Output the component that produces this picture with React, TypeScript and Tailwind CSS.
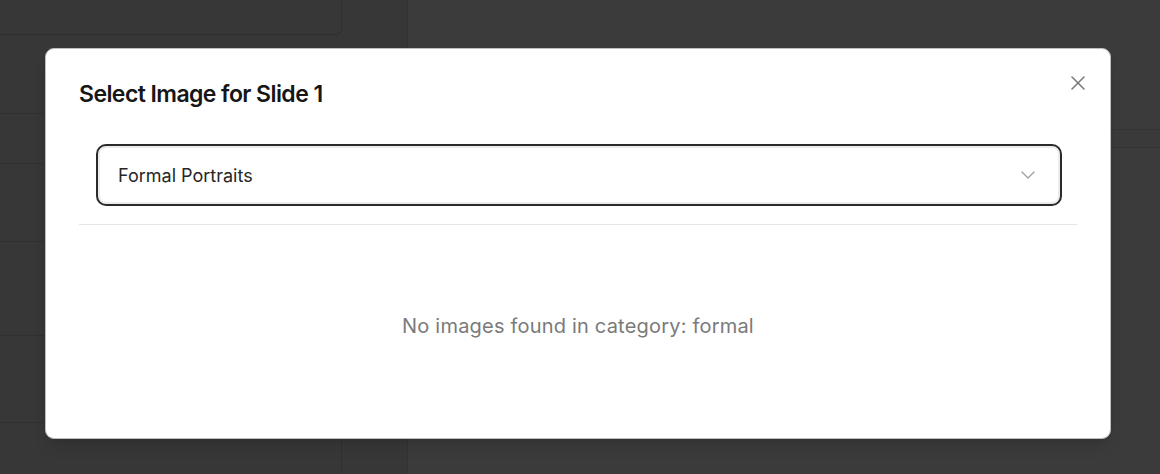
import React from "react";
import { X, ChevronDown } from "lucide-react";

export default function App() {
  return (
    <div
      className="relative w-[1160px] h-[474px] overflow-hidden flex bg-[#3b3b3b]"
      style={{ fontFamily: "Inter, 'Noto Sans', sans-serif" }}
    >
      {/* left panel (dimmed background page) */}
      <div className="w-[408px] h-full flex flex-col border-r border-[#333333] bg-[#373737]">
        <div className="w-[342px] h-[35px] border-b border-r border-[#2f2f2f] rounded-br-md" />
        <div className="w-[342px] flex-1 flex flex-col">
          <div className="h-[79px] border-b border-[#303030]" />
          <div className="h-[50px] border-b border-[#303030]" />
          <div className="h-[78px] border-b border-[#303030]" />
          <div className="h-[94px] border-b border-[#303030]" />
          <div className="h-[87px] border-b border-[#303030]" />
          <div className="flex-1 border-r border-[#303030]" />
        </div>
      </div>
      {/* right panel */}
      <div className="flex-1 flex flex-col">
        <div className="h-[130px] border-b border-[#353535]" />
        <div className="h-[18px] border-b border-[#353535] bg-[#3a3a3a]" />
        <div className="flex-1" />
      </div>

      {/* dialog */}
      <div className="absolute left-[45px] top-[48px] w-[1066px] h-[391px] bg-white rounded-[9px] border border-[#bdbdbd] shadow-lg flex flex-col px-[33px] pt-[33px]">
        <h2 className="h-[24px] text-[23px] leading-[24px] font-semibold tracking-tight text-[#161616]">
          Select Image for Slide 1
        </h2>
        <button className="absolute right-[20px] top-[22px] text-[#7c7c7c]">
          <X size={24} strokeWidth={1.6} />
        </button>

        <div className="mt-[38px] pl-[17px] pr-[15px] pb-[18px] border-b border-[#e6e6e6]">
          <div className="h-[62px] rounded-[10px] border-2 border-[#2a2a2a] shadow-[inset_0_0_0_2px_#ececec] flex items-center justify-between pl-[20px] pr-[20px]">
            <span className="text-[18px] text-[#262626]">Formal Portraits</span>
            <ChevronDown size={24} strokeWidth={1.4} className="text-[#a0a0a0]" />
          </div>
        </div>

        <div className="flex-1 flex justify-center pt-[88px]">
          <p className="text-[20px] leading-[27px] tracking-[0.01em] text-[#7a7a7a]">
            No images found in category: formal
          </p>
        </div>
      </div>
    </div>
  );
}
